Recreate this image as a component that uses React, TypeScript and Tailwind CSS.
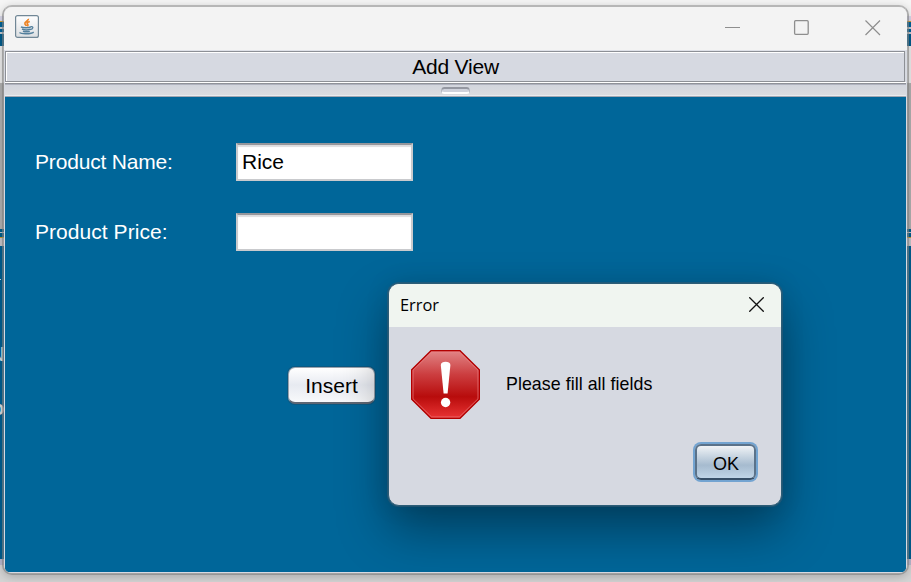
import React from "react";

const strips = [
  "h-4 bg-[#f5f5f5]",
  "h-[5px] bg-[#d9d8ea]",
  "h-px bg-[#d3a030]",
  "h-[5px] bg-[#00639a]",
  "h-[2px] bg-[#c3ccd4]",
  "h-[3px] bg-[#00639a]",
  "h-[2px] bg-[#c3ccd4]",
  "h-[12px] bg-[#005c8c]",
  "h-[37px] bg-[#ededed]",
  "h-[146px] bg-[#b2b2b2]",
  "h-[3px] bg-[#005f8c]",
  "h-px bg-[#c3ccd4]",
  "h-[4px] bg-[#005f8c]",
  "h-px bg-[#c99a2e]",
  "h-[8px] bg-[#c6c6ca]",
  "h-[313px] bg-[#005f90]",
  "h-[6px] bg-[#b8b9cf]",
  "h-[17px] bg-[#d4d4d4]",
];

function Desktop() {
  return (
    <div className="flex h-full flex-col">
      {strips.map((c, i) => (
        <div key={i} className={"w-full shrink-0 " + c} />
      ))}
    </div>
  );
}

function JavaIcon() {
  return (
    <svg width="24" height="24" viewBox="0 0 24 24" fill="none">
      <defs>
        <linearGradient id="cupbg" x1="0" y1="0" x2="0" y2="1">
          <stop offset="0" stopColor="#ffffff" />
          <stop offset="1" stopColor="#dcdfe2" />
        </linearGradient>
      </defs>
      <rect x="0.6" y="0.6" width="22.8" height="21.8" rx="2" fill="url(#cupbg)" stroke="#718796" strokeWidth="1.2" />
      <path d="M13.400 3.800c.6 2-4.200 2.800-3.500 4.900.3 1 1.200 1.400 1.500 2.300M14.800 6.500c-2.700.8-3.200 1.600-2.100 2.800.6.700.2 1.300-.5 1.900" stroke="#ee8526" strokeWidth="1.700" />
      <path d="M6 11.900c1.800 1.200 8 1.100 10 0M7 14.200c2.200.8 6.500.8 8.600 0M7.900 16.300c2 .6 4.900.6 6.900 0M4.500 17.600c1.800 1.700 11.500 1.700 14.200-.5" stroke="#54809d" strokeWidth="1.400" />
      <path d="M15.600 11.700c3.300-.9 2.900 2.600-.6 3" stroke="#54809d" strokeWidth="1.300" />
    </svg>
  );
}

function TitleBar() {
  return (
    <div className="flex h-[43px] shrink-0 items-start bg-[#f3f3f3] pl-[11px]">
      <div className="pt-2">
        <JavaIcon />
      </div>
      <div className="ml-auto flex pr-[26px] pt-[13px]">
        <svg width="156" height="16" viewBox="0 0 156 16" fill="none" stroke="#8e8e8e">
          <path d="M0 7.500h15" />
          <rect x="69.600" y="0.700" width="13.600" height="13.600" rx="1" strokeWidth="1.300" />
          <path d="M140.500 0.500l14.500 14.500M155 0.500l-14.500 14.500" strokeWidth="1.200" />
        </svg>
      </div>
    </div>
  );
}

function Field({ label, value, tracking }: { label: string; value: string; tracking: string }) {
  return (
    <div className="flex h-[38px] items-center">
      <span className={"w-[201px] text-[21px] leading-6 text-white " + tracking}>{label}</span>
      <div className="flex h-[38px] w-[177px] items-center border-2 border-[#c9cacd] border-t-[#96979c] bg-white pl-1 text-[21px] leading-6 text-black shadow-[inset_0_2px_1px_#dddddf]">
        {value}
      </div>
    </div>
  );
}

function ErrorIcon() {
  return (
    <svg width="70" height="70" viewBox="0 0 70 70">
      <defs>
        <linearGradient id="stop" x1="0" y1="0" x2="0" y2="1">
          <stop offset="0" stopColor="#e18586" />
          <stop offset="0.35" stopColor="#cc3e40" />
          <stop offset="0.68" stopColor="#b80c0c" />
          <stop offset="1" stopColor="#e93434" />
        </linearGradient>
      </defs>
      <path d="M20 .700h29l19.300 19v29.600l-19.300 19H20L.700 49.300V19.700z" fill="url(#stop)" stroke="#b20000" strokeWidth="1.400" />
      <path d="M20.600 2h27.800L67 20.200v28.600L48.400 67H20.600L2 48.800V20.200z" fill="none" stroke="#ef8588" strokeOpacity="0.650" />
      <path d="M29.800 15c0-4.200 9.600-4.200 9.600 0l-2.800 28.500h-4z" fill="#fff" />
      <circle cx="34.600" cy="52.500" r="4.700" fill="#fff" />
    </svg>
  );
}

function ErrorDialog() {
  return (
    <div className="absolute left-[388px] top-[283px] flex h-[223px] w-[394px] flex-col overflow-hidden rounded-[11px] border border-[#2c5d77] bg-[#d6d9e1] shadow-[0_0_0_1px_rgba(50,90,115,0.6),0_24px_50px_rgba(0,0,0,0.38),0_0_24px_rgba(0,0,0,0.1)]">
      <div className="flex h-[43px] shrink-0 items-start justify-between bg-[#f0f5f0] pl-[11px] pr-[17px]">
        <span className="pt-[9px] font-['Open_Sans',sans-serif] text-[16.400px] leading-6 text-black">Error</span>
        <svg className="mt-[13px]" width="15" height="15" viewBox="0 0 15 15" stroke="#111" strokeWidth="1.300">
          <path d="M.300.300l14.400 14.400M14.700.300l-14.400 14.400" />
        </svg>
      </div>
      <div className="flex items-center pl-[22px] pt-[23px]">
        <ErrorIcon />
        <span className="ml-[25px] pb-[3px] text-[17.800px] leading-5 tracking-[0.050px] text-black">Please fill all fields</span>
      </div>
      <div className="flex justify-end pr-[25px] pt-[24px]">
        <button className="h-[36px] w-[61px] rounded-[6px] border-2 border-[#5b7289] border-b-[#374f68] bg-linear-to-b from-[#f0f3f6] via-[#a6bbcf] via-60% to-[#c0d5e8] pl-px pt-[3px] text-[18px] leading-none text-black shadow-[0_0_0_2px_#73a4d1]">
          OK
        </button>
      </div>
    </div>
  );
}

export default function App() {
  return (
    <div className="relative h-[582px] w-[911px] overflow-hidden font-['Liberation_Sans',Arial,sans-serif]">
      <Desktop />
      <div className="absolute left-[-10px] top-[342px] text-[20px] leading-6 text-[#d6dce0]">N</div>
      <div className="absolute left-[-8px] top-[396px] text-[20px] font-bold leading-6 text-[#d6dce0]">o</div>
      <div className="absolute left-0 top-[279px] h-px w-px bg-[#d6dce0]" />
      <div className="absolute left-[2px] top-[5px] h-[570px] w-[907px] overflow-hidden rounded-[10px] border-2 border-[#80808099] border-t-[#b6b6b6] bg-[#d6d9df] bg-clip-padding shadow-[0_2px_10px_rgba(0,0,0,0.2)]">
        <div className="flex h-full flex-col">
          <TitleBar />
          <div className="flex min-h-0 flex-1 flex-col border-x border-b border-[#d7dae2]">
            <div className="h-px shrink-0 bg-[#dfe1e8]" />
            <div className="mr-px flex h-[31px] shrink-0 items-center justify-center border border-[#8d9096] bg-[#d6d9e1] text-[21px] leading-6 text-black shadow-[inset_0_1px_0_#fff,inset_1px_0_0_#fff]">
              <span className="pl-px tracking-[-0.200px]">Add View</span>
            </div>
            <div className="h-px shrink-0 bg-white" />
            <div className="h-px shrink-0 bg-[#8f9299]" />
            <div className="h-px shrink-0 bg-[#afb2be]" />
            <div className="flex h-[10px] shrink-0 justify-center bg-linear-to-b from-[#d2d5dd] to-[#dadce0] pt-[2px]">
              <div className="mr-px h-[7px] w-[29px] rounded-[4px] border-2 border-x border-[#b5b8c1] border-b-white border-t-[#9497a1] bg-[#cfd2dc]" />
            </div>
            <div className="h-px shrink-0 bg-[#e9ebef]" />
            <div className="h-px shrink-0 bg-[#a0a7b2]" />
            <div className="flex min-h-0 flex-1 flex-col gap-8 bg-[#006699] pl-[30px] pt-[46px]">
              <Field label="Product Name:" value="Rice" tracking="tracking-[-0.180px]" />
              <Field label="Product Price:" value="" tracking="tracking-[0.050px]" />
              <button className="ml-[253px] mt-[84px] h-[37px] w-[87px] rounded-[7px] border border-[#9ba3ae] border-b-2 border-b-[#5d6673] bg-linear-to-b from-[#ffffff] via-[#e7eaf1] to-[#f8f9fb] text-[21px] leading-none text-black shadow-[0_0_0_1px_rgba(40,60,80,0.3)]">
                Insert
              </button>
            </div>
          </div>
        </div>
      </div>
      <ErrorDialog />
    </div>
  );
}
